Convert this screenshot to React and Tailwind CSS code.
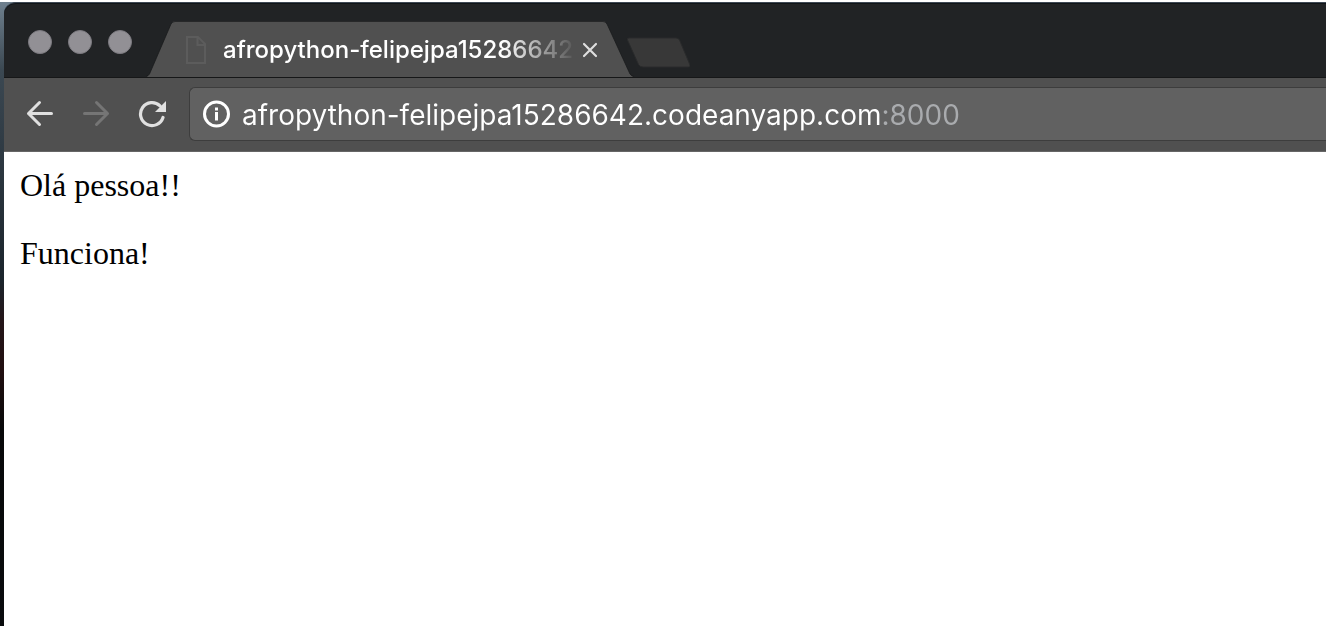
import React from "react";

function WindowControls() {
  return (
    <div className="flex gap-4 pt-[27px] pl-6">
      {["Close window", "Minimize window", "Zoom window"].map((label) => (
        <button
          key={label}
          type="button"
          aria-label={label}
          className="size-6 rounded-full border border-[#7c7a80] bg-[#929095]"
        />
      ))}
    </div>
  );
}

function Tab() {
  return (
    <div className="relative mt-[18px] ml-3.5 flex h-14 w-[488px] shrink-0 items-center pt-0.5 pr-[34px] pl-[39px]">
      <svg className="absolute inset-0 size-full" viewBox="0 0 488 56" aria-hidden="true">
        <path d="M0 56 Q2 55.500 3.500 53 L25 3 Q26.500 0 29 0 H457 Q459.500 0 461 3 L484 53 Q485.500 55.500 488 56 Z" fill="#505050" />
        <path
          d="M0 55.500 Q2 55 3.500 53 L25 3 Q26.500 .5 29 .5 H457 Q459.500 .5 461 3 L484 53 Q485.500 55 488 55.500"
          fill="none"
          stroke="#1a1b1c"
          strokeOpacity=".75"
        />
      </svg>
      <svg className="relative h-7 w-[22px] shrink-0" viewBox="0 0 22 28" fill="none" stroke="#5c5c5c" strokeWidth="2" aria-hidden="true">
        <path d="M2 1 H13 L20 8 V27 H2 Z M12.500 1 V9 H20" />
      </svg>
      <span className="relative ml-4 min-w-0 flex-1 [mask-image:linear-gradient(to_right,black_280px,transparent_354px)] font-['Inter',sans-serif] text-2xl leading-8 font-medium whitespace-nowrap text-white">
        afropython-felipejpa15286642
      </span>
      <button type="button" aria-label="Close tab" className="relative ml-1 shrink-0">
        <svg className="size-5" viewBox="0 0 20 20" fill="none" stroke="#dedede" strokeWidth="2.200" strokeLinecap="round">
          <path d="M4 4 L16 16 M16 4 L4 16" />
        </svg>
      </button>
    </div>
  );
}

function TabStrip() {
  return (
    <header className="flex h-[76px] overflow-hidden rounded-tl-xl border-t border-[#3e4854] bg-[#212325] shadow-[inset_0_1px_0_#101519,inset_0_-1px_0_#161718]">
      <WindowControls />
      <Tab />
      <button type="button" aria-label="New tab" className="mt-[33px] -ml-2 h-[33px] shrink-0">
        <svg className="h-[33px] w-16" viewBox="0 0 64 33">
          <path
            d="M3 2 H50 Q52.500 2 53.500 4 L64 29 Q64.500 31 62.500 31 H17 Q14 31 12.500 28.500 L1.500 4 Q.5 2 3 2 Z"
            fill="#383838"
            stroke="#2a2b2c"
          />
        </svg>
      </button>
    </header>
  );
}

function Toolbar() {
  return (
    <nav className="flex h-[74px] items-center border-b border-[#666] bg-[#505050] pb-0.5">
      <button type="button" aria-label="Back" className="ml-[22px]">
        <svg className="size-7" viewBox="0 0 28 28" fill="none" stroke="#e0e0e0" strokeWidth="3" strokeLinecap="round" strokeLinejoin="round">
          <path d="M25.500 13.500 H2.500 M13.500 2.500 L2.500 13.500 L13.500 24.500" />
        </svg>
      </button>
      <button type="button" aria-label="Forward" className="ml-7" disabled>
        <svg className="size-7" viewBox="0 0 28 28" fill="none" stroke="#757575" strokeWidth="3" strokeLinecap="round" strokeLinejoin="round">
          <path d="M2.500 13.500 H25.500 M14.500 2.500 L25.500 13.500 L14.500 24.500" />
        </svg>
      </button>
      <button type="button" aria-label="Reload" className="ml-7">
        <svg className="size-7" viewBox="0 0 28 28">
          <path d="M25 17.500 A11.500 11.500 0 1 1 22 5.800" fill="none" stroke="#e0e0e0" strokeWidth="3.200" strokeLinecap="round" />
          <path d="M28 1 V12 H17 Z" fill="#e0e0e0" />
        </svg>
      </button>
      <div className="ml-[23px] flex h-[54px] min-w-0 flex-1 items-center rounded-l-md border border-r-0 border-[#3d3d3d] bg-[#616161] pl-3">
        <svg className="size-7 shrink-0" viewBox="0 0 28 28" aria-hidden="true">
          <circle cx="14.500" cy="14" r="12" fill="none" stroke="#fff" strokeWidth="3" />
          <path d="M13 12 H16 V20.500 H13 Z M13 7.500 H16 V10.500 H13 Z" fill="#fff" />
        </svg>
        <input
          type="text"
          aria-label="Address"
          defaultValue="afropython-felipejpa15286642.codeanyapp.com:8000"
          className="ml-3 min-w-0 flex-1 bg-[linear-gradient(to_right,#fff_639px,#a9abae_639px)] bg-clip-text pt-0.5 font-['Inter',sans-serif] text-[28px] leading-10 text-transparent outline-none"
        />
      </div>
    </nav>
  );
}

export default function App() {
  return (
    <div className="min-h-screen bg-[linear-gradient(to_bottom,#718290_0px,#3b4852_70px,#1b242c_280px,#241619_320px,#210f10_370px,#070809_430px,#090b0d_100%)] pl-1">
      <div className="-ml-1 h-0.5 bg-white" />
      <TabStrip />
      <Toolbar />
      <main className="min-h-[calc(100vh-152px)] bg-white px-4 pt-[15px] font-['Liberation_Serif',serif] text-[32px] leading-9 text-black">
        <p>Olá pessoa!!</p>
        <p className="mt-8">Funciona!</p>
      </main>
    </div>
  );
}
